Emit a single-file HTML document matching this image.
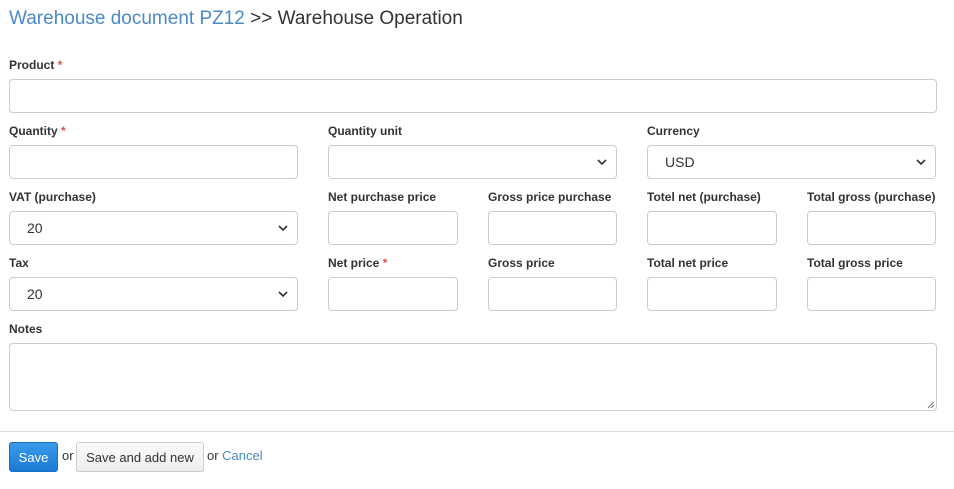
<!DOCTYPE html><html><head><style>
body{margin:0;width:954px;height:489px;background:#fff;font-family:"Liberation Sans",Arial,sans-serif;position:relative;overflow:hidden}
.a{position:absolute}
h1{position:absolute;left:9px;top:8px;margin:0;font-size:19px;font-weight:normal;color:#333;white-space:nowrap}
h1 span{color:#4a8ac9}
.l{position:absolute;font-size:12px;font-weight:bold;color:#333;white-space:nowrap}
.l i{color:#d9534f;font-style:normal}
.f{position:absolute;box-sizing:border-box;border:1px solid #ccc;border-radius:4px;background:#fff;height:34px;font-size:14px;color:#333}
.f.s{padding-left:17px;line-height:33px}
.f.s svg{position:absolute;right:9px;top:13px}
</style></head><body>
<h1><span>Warehouse document PZ12</span> &gt;&gt; Warehouse Operation</h1>
<div class="l" style="left:9px;top:58px">Product <i>*</i></div>
<div class="f" style="left:9px;top:79px;width:928px"></div>

<div class="l" style="left:9px;top:124px">Quantity <i>*</i></div>
<div class="f" style="left:9px;top:145px;width:289px"></div>
<div class="l" style="left:328px;top:124px">Quantity unit</div>
<div class="f s" style="left:328px;top:145px;width:289px"><svg width="10" height="7"><path d="M1 1L5 5L9 1" fill="none" stroke="#333" stroke-width="1.6"/></svg></div>
<div class="l" style="left:647px;top:124px">Currency</div>
<div class="f s" style="left:647px;top:145px;width:289px">USD<svg width="10" height="7"><path d="M1 1L5 5L9 1" fill="none" stroke="#333" stroke-width="1.6"/></svg></div>

<div class="l" style="left:9px;top:190px">VAT (purchase)</div>
<div class="f s" style="left:9px;top:211px;width:289px">20<svg width="10" height="7"><path d="M1 1L5 5L9 1" fill="none" stroke="#333" stroke-width="1.6"/></svg></div>
<div class="l" style="left:328px;top:190px">Net purchase price</div>
<div class="f" style="left:328px;top:211px;width:130px"></div>
<div class="l" style="left:488px;top:190px">Gross price purchase</div>
<div class="f" style="left:488px;top:211px;width:129px"></div>
<div class="l" style="left:647px;top:190px">Totel net (purchase)</div>
<div class="f" style="left:647px;top:211px;width:130px"></div>
<div class="l" style="left:807px;top:190px">Total gross (purchase)</div>
<div class="f" style="left:807px;top:211px;width:129px"></div>

<div class="l" style="left:9px;top:256px">Tax</div>
<div class="f s" style="left:9px;top:277px;width:289px">20<svg width="10" height="7"><path d="M1 1L5 5L9 1" fill="none" stroke="#333" stroke-width="1.6"/></svg></div>
<div class="l" style="left:328px;top:256px">Net price <i>*</i></div>
<div class="f" style="left:328px;top:277px;width:130px"></div>
<div class="l" style="left:488px;top:256px">Gross price</div>
<div class="f" style="left:488px;top:277px;width:129px"></div>
<div class="l" style="left:647px;top:256px">Total net price</div>
<div class="f" style="left:647px;top:277px;width:130px"></div>
<div class="l" style="left:807px;top:256px">Total gross price</div>
<div class="f" style="left:807px;top:277px;width:129px"></div>

<div class="l" style="left:9px;top:322px">Notes</div>
<div class="f" style="left:9px;top:343px;width:928px;height:68px"><svg class="a" style="right:1px;bottom:1px" width="8" height="8"><path d="M7 1L1 7M7 4L4 7" stroke="#777" stroke-width="1"/></svg></div>

<div class="a" style="left:0;top:431px;width:954px;height:1px;background:#ddd"></div>
<div class="a" style="left:9px;top:442px;width:49px;height:30px;box-sizing:border-box;border:1px solid #1a6fc0;border-radius:3px;background:linear-gradient(#3a9be8,#1b7ad6);color:#fff;font-size:13px;line-height:30px;text-align:center">Save</div>
<div class="a" style="left:62px;top:448px;font-size:13px;color:#333">or</div>
<div class="a" style="left:76px;top:442px;width:128px;height:30px;box-sizing:border-box;border:1px solid #ccc;border-radius:3px;background:linear-gradient(#fafafa,#eee);color:#333;font-size:13px;line-height:30px;text-align:center">Save and add new</div>
<div class="a" style="left:207px;top:448px;font-size:13px;color:#333">or <span style="color:#4a8ac9">Cancel</span></div>
</body></html>
